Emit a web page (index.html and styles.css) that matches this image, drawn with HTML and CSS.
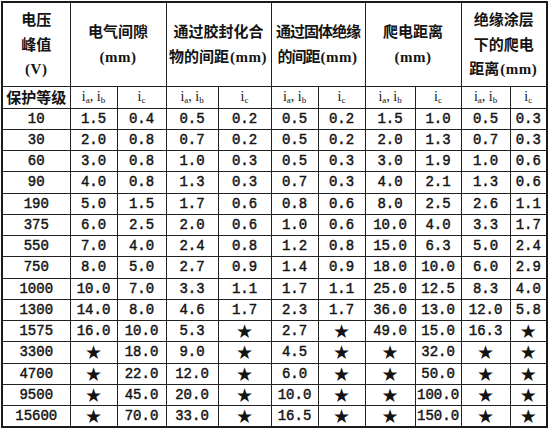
FILE: index.html
```html
<!DOCTYPE html>
<html lang="zh">
<head>
<meta charset="utf-8">
<link rel="stylesheet" href="styles.css">
</head>
<body>
<table class="spec">
  <colgroup>
    <col class="c-level">
    <col class="c47"><col class="c49">
    <col class="c52"><col class="c53">
    <col class="c47"><col class="c47">
    <col class="c50"><col class="c46">
    <col class="c49"><col class="c37">
  </colgroup>
  <thead>
    <tr class="head">
      <th>电压<br>峰值<br><span class="lat">(V)</span></th>
      <th colspan="2">电气间隙<br><span class="lat">(mm)</span></th>
      <th colspan="2">通过胶封化合<br>物的间距<span class="lat">(mm)</span></th>
      <th colspan="2" class="tight">通过固体绝缘<br>的间距<span class="lat">(mm)</span></th>
      <th colspan="2">爬电距离<br><span class="lat">(mm)</span></th>
      <th colspan="2">绝缘涂层<br>下的爬电<br>距离<span class="lat">(mm)</span></th>
    </tr>
    <tr class="sub">
      <th>保护等级</th>
      <th class="i">i<sub>a</sub>, i<sub>b</sub></th><th class="i">i<sub>c</sub></th>
      <th class="i">i<sub>a</sub>, i<sub>b</sub></th><th class="i">i<sub>c</sub></th>
      <th class="i">i<sub>a</sub>, i<sub>b</sub></th><th class="i">i<sub>c</sub></th>
      <th class="i">i<sub>a</sub>, i<sub>b</sub></th><th class="i">i<sub>c</sub></th>
      <th class="i">i<sub>a</sub>, i<sub>b</sub></th><th class="i">i<sub>c</sub></th>
    </tr>
  </thead>
  <tbody>
    <tr><td>10</td><td>1.5</td><td>0.4</td><td>0.5</td><td>0.2</td><td>0.5</td><td>0.2</td><td>1.5</td><td>1.0</td><td>0.5</td><td>0.3</td></tr>
    <tr><td>30</td><td>2.0</td><td>0.8</td><td>0.7</td><td>0.2</td><td>0.5</td><td>0.2</td><td>2.0</td><td>1.3</td><td>0.7</td><td>0.3</td></tr>
    <tr><td>60</td><td>3.0</td><td>0.8</td><td>1.0</td><td>0.3</td><td>0.5</td><td>0.3</td><td>3.0</td><td>1.9</td><td>1.0</td><td>0.6</td></tr>
    <tr><td>90</td><td>4.0</td><td>0.8</td><td>1.3</td><td>0.3</td><td>0.7</td><td>0.3</td><td>4.0</td><td>2.1</td><td>1.3</td><td>0.6</td></tr>
    <tr><td>190</td><td>5.0</td><td>1.5</td><td>1.7</td><td>0.6</td><td>0.8</td><td>0.6</td><td>8.0</td><td>2.5</td><td>2.6</td><td>1.1</td></tr>
    <tr><td>375</td><td>6.0</td><td>2.5</td><td>2.0</td><td>0.6</td><td>1.0</td><td>0.6</td><td>10.0</td><td>4.0</td><td>3.3</td><td>1.7</td></tr>
    <tr><td>550</td><td>7.0</td><td>4.0</td><td>2.4</td><td>0.8</td><td>1.2</td><td>0.8</td><td>15.0</td><td>6.3</td><td>5.0</td><td>2.4</td></tr>
    <tr><td>750</td><td>8.0</td><td>5.0</td><td>2.7</td><td>0.9</td><td>1.4</td><td>0.9</td><td>18.0</td><td>10.0</td><td>6.0</td><td>2.9</td></tr>
    <tr><td>1000</td><td>10.0</td><td>7.0</td><td>3.3</td><td>1.1</td><td>1.7</td><td>1.1</td><td>25.0</td><td>12.5</td><td>8.3</td><td>4.0</td></tr>
    <tr><td>1300</td><td>14.0</td><td>8.0</td><td>4.6</td><td>1.7</td><td>2.3</td><td>1.7</td><td>36.0</td><td>13.0</td><td>12.0</td><td>5.8</td></tr>
    <tr><td>1575</td><td>16.0</td><td>10.0</td><td>5.3</td><td class="star">★</td><td>2.7</td><td class="star">★</td><td>49.0</td><td>15.0</td><td>16.3</td><td class="star">★</td></tr>
    <tr><td>3300</td><td class="star">★</td><td>18.0</td><td>9.0</td><td class="star">★</td><td>4.5</td><td class="star">★</td><td class="star">★</td><td>32.0</td><td class="star">★</td><td class="star">★</td></tr>
    <tr><td>4700</td><td class="star">★</td><td>22.0</td><td>12.0</td><td class="star">★</td><td>6.0</td><td class="star">★</td><td class="star">★</td><td>50.0</td><td class="star">★</td><td class="star">★</td></tr>
    <tr><td>9500</td><td class="star">★</td><td>45.0</td><td>20.0</td><td class="star">★</td><td>10.0</td><td class="star">★</td><td class="star">★</td><td>100.0</td><td class="star">★</td><td class="star">★</td></tr>
    <tr><td>15600</td><td class="star">★</td><td>70.0</td><td>33.0</td><td class="star">★</td><td>16.5</td><td class="star">★</td><td class="star">★</td><td>150.0</td><td class="star">★</td><td class="star">★</td></tr>
  </tbody>
</table>
</body>
</html>
```

FILE: styles.css
```css
html, body {
  margin: 0;
  padding: 0;
  background: #ffffff;
}

body {
  padding: 1px 0 0 1px;
}

.spec {
  border-collapse: collapse;
  table-layout: fixed;
  width: 547px;
  border: 2px solid #1a1a1a;
  color: #141414;
  font-family: "Liberation Mono", "Noto Sans CJK SC", monospace;
}

.c-level { width: 68px; }
.c37 { width: 37px; }
.c46 { width: 46px; }
.c47 { width: 47px; }
.c49 { width: 49px; }
.c50 { width: 50px; }
.c52 { width: 52px; }
.c53 { width: 53px; }

.spec th,
.spec td {
  border: 1px solid #222;
  padding: 0;
  text-align: center;
  vertical-align: middle;
  overflow: hidden;
  white-space: nowrap;
}

.head {
  height: 84px;
}

.head th {
  font-family: "Noto Sans CJK SC", sans-serif;
  font-weight: 700;
  font-size: 15px;
  line-height: 24.5px;
}

.head th.tight {
  letter-spacing: -1px;
}

.lat {
  font-family: "Liberation Serif", serif;
  font-weight: 700;
  letter-spacing: 0.5px;
  padding: 0 1px;
}

.sub {
  height: 22px;
}

.sub th {
  font-family: "Noto Sans CJK SC", sans-serif;
  font-weight: 700;
  font-size: 15px;
  line-height: 20px;
}

.sub th.i {
  font-family: "Liberation Serif", serif;
  font-weight: 400;
  font-size: 14px;
}

.sub th.i sub {
  font-size: 9px;
  vertical-align: -2px;
  line-height: 0;
}

.spec tbody tr {
  height: 21.25px;
}

.spec td {
  font-size: 14px;
  font-weight: 400;
  line-height: 18px;
  -webkit-text-stroke: 0.45px #141414;
}

.spec td.star {
  font-family: "DejaVu Sans", sans-serif;
  font-size: 19px;
  -webkit-text-stroke: 0;
}
```
